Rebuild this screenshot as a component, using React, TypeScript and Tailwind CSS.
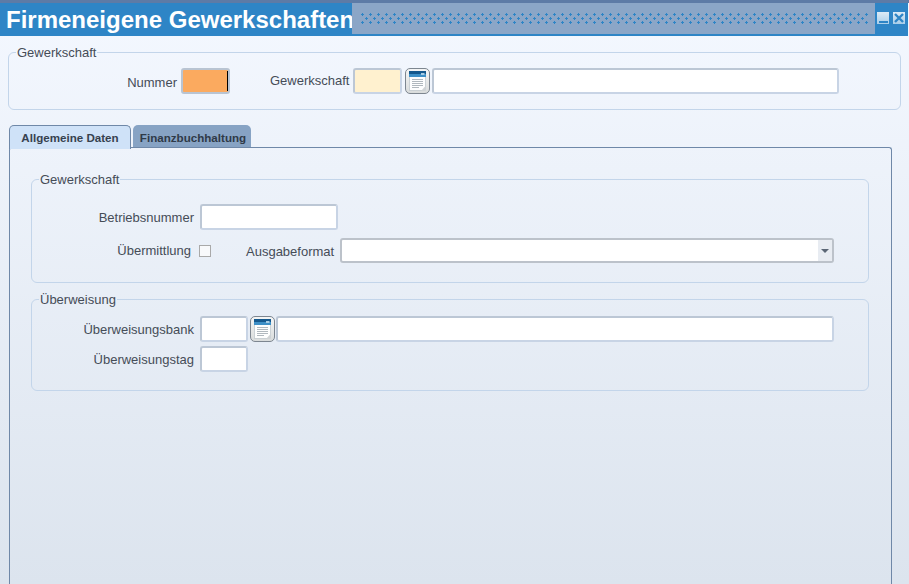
import React from 'react';

function BookIcon() {
  return (
    <button className="flex h-[26px] w-[25px] shrink-0 items-center justify-center rounded-[5px] border border-[#7d8690] bg-gradient-to-b from-[#f4f5f5] to-[#d9dcdc]">
      <svg width="21" height="23" viewBox="0 0 21 23">
        <rect x="2.500" y="3.500" width="16" height="17" fill="#fdfefe" stroke="#b3bcc4" strokeWidth="0.6" />
        <rect x="2" y="1" width="17" height="3" fill="#14588d" />
        <rect x="2" y="4" width="17" height="3" fill="#3d8fc6" />
        <rect x="14" y="3" width="3.500" height="2" fill="#a5cbe3" />
        <path d="M5 9.500h11M5 11.500h11M5 13.500h11M5 15.500h11M5 17.500h7" stroke="#b0b8be" strokeWidth="1" />
        <path d="M14 21l4.500-5v5z" fill="#cfd3d5" />
      </svg>
    </button>
  );
}

function Field({ className }: { className: string }) {
  return <div className={`h-[26px] shrink-0 rounded-[3px] border-2 border-[#c8d4e5] border-l-[#bcc7d5] border-t-[#bcc7d5] ${className}`} />;
}

function Group({ title, className, children }: { title: string; className: string; children: React.ReactNode }) {
  return (
    <fieldset className={`rounded-[6px] border border-[#c3d5ea] ${className}`}>
      <legend className="ml-[7px] px-[1px] text-[13px] leading-[14px] text-[#454c57]">
        <span className="block translate-y-[1px]">{title}</span>
      </legend>
      {children}
    </fieldset>
  );
}

export default function App() {
  return (
    <div className="flex h-[584px] w-[909px] flex-col overflow-hidden bg-gradient-to-b from-[#f4f8ff] to-[#dce4ee] text-[13px] text-[#454c57] [font-family:'Liberation_Sans',Arial,sans-serif]">
      <div className="h-[3px] shrink-0 bg-[#5d7ba6]" />
      <div className="mr-[1px] flex h-[33px] shrink-0 bg-[#2e85c6]">
        <h1 className="w-[352px] shrink-0 pl-[6px] text-[24px] leading-[33px] font-bold whitespace-nowrap text-white">Firmeneigene Gewerkschaften</h1>
        <div className="h-[31px] flex-1 bg-[#8ba6c7]">
          <svg width="523" height="31">
            <defs>
              <pattern id="dots" x="9" y="10" width="8" height="8" patternUnits="userSpaceOnUse">
                <path d="M1 0h1v1h1v1h-1v1h-1v-1h-1v-1h1zM5 4h1v1h1v1h-1v1h-1v-1h-1v-1h1z" fill="#2e85c6" />
              </pattern>
            </defs>
            <rect x="8" y="10" width="509" height="11" fill="url(#dots)" />
          </svg>
        </div>
        <div className="flex w-[33px] shrink-0 items-start gap-[4px] pt-[9px] pl-[2px]">
          <div className="flex h-[12px] w-[12px] items-end justify-center bg-gradient-to-b from-[#dcebf6] to-[#a9cee9] pb-[1px]">
            <div className="h-[2px] w-[9px] bg-[#2e85c6]" />
          </div>
          <div className="h-[12px] w-[12px] bg-gradient-to-b from-[#dcebf6] to-[#a9cee9]">
            <svg width="12" height="12" viewBox="0 0 12 12">
              <path d="M2 2l8 8M10 2l-8 8" stroke="#2e85c6" strokeWidth="2.4" />
            </svg>
          </div>
        </div>
      </div>

      <Group title="Gewerkschaft" className="mx-[8px] mt-[9px] h-[65px] shrink-0">
        <div className="flex items-center pt-[9px]">
          <span className="w-[168px] translate-y-[2px] text-right">Nummer</span>
          <div className="ml-[4px] flex h-[26px] w-[49px] justify-end rounded-[3px] border-2 border-[#b9c4d2] bg-[#fbaa5f]">
            <div className="my-[1px] w-[1px] bg-black" />
          </div>
          <span className="ml-[40px] w-[79px]">Gewerkschaft</span>
          <Field className="ml-[4px] w-[49px] bg-[#fff1cf]" />
          <div className="ml-[3px]"><BookIcon /></div>
          <Field className="ml-[2px] w-[407px] bg-white" />
        </div>
      </Group>

      <div className="ml-[9px] mt-[15px] flex h-[22px] shrink-0 items-start">
        <div className="z-10 flex h-[24px] w-[122px] items-center justify-center rounded-t-[5px] border border-b-0 border-[#6f88a8] bg-[#cfe2f8] text-[11.6px] font-bold text-[#36414f]">Allgemeine Daten</div>
        <div className="ml-[2px] flex h-[22px] w-[118px] items-center justify-center rounded-t-[5px] bg-[#87a3c4] pt-[3px] pl-[2px] text-[11.6px] font-bold text-[#2f3a48]">Finanzbuchhaltung</div>
      </div>

      <div className="ml-[9px] w-[883px] flex-1 rounded-t-[3px] border border-b-0 border-[#6f88a8] pt-[24px] pr-[22px] pl-[21px]">
        <Group title="Gewerkschaft" className="h-[111px]">
          <div className="flex items-center pt-[18px]">
            <span className="w-[162px] translate-y-[1px] text-right">Betriebsnummer</span>
            <Field className="ml-[6px] w-[138px] bg-white" />
          </div>
          <div className="mt-[8px] flex items-center">
            <span className="w-[159px] text-right">Übermittlung</span>
            <div className="ml-[8px] h-[12px] w-[12px] border border-[#a9a9a9] bg-[#f8f9fb]" />
            <span className="ml-[35px] w-[87px] translate-y-[1px]">Ausgabeformat</span>
            <div className="ml-[7px] flex h-[25px] w-[494px] justify-end overflow-hidden rounded-[3px] border-2 border-[#bcc2ca] bg-white">
              <div className="flex w-[14px] items-center justify-center bg-[#e8ecf2]">
                <div className="h-0 w-0 border-x-[4px] border-t-[4px] border-x-transparent border-t-[#5b6675]" />
              </div>
            </div>
          </div>
        </Group>

        <Group title="Überweisung" className="mt-[9px] h-[99px]">
          <div className="flex items-center pt-[10px]">
            <span className="w-[162px] translate-y-[1px] text-right">Überweisungsbank</span>
            <Field className="ml-[6px] w-[48px] bg-white" />
            <div className="ml-[2px]"><BookIcon /></div>
            <Field className="ml-[1px] w-[558px] bg-white" />
          </div>
          <div className="mt-[4px] flex items-center">
            <span className="w-[162px] translate-y-[1px] text-right">Überweisungstag</span>
            <Field className="ml-[6px] w-[48px] bg-white" />
          </div>
        </Group>
      </div>
    </div>
  );
}
